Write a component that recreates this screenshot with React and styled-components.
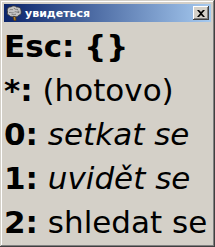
import React from 'react';
import styled, { createGlobalStyle } from 'styled-components';

/*
	:::: Styles ::::
*/
const Global = createGlobalStyle`
	html, body {
		margin: 0;
		padding: 0;
		background: #d4d0c8;
	}
`;

const Window = styled.div`
	box-sizing: border-box;
	width: 215px;
	height: 247px;
	padding: 4px;
	background-color: #d4d0c8;
	box-shadow:
		inset -1px -1px #404040,
		inset 1px 1px #d4d0c8,
		inset -2px -2px #808080,
		inset 2px 2px #ffffff;
	display: flex;
	flex-direction: column;
	overflow: hidden;
`;

const TitleBar = styled.div`
	height: 18px;
	flex: none;
	display: flex;
	align-items: center;
	padding: 0 2px;
	background: linear-gradient(to right, #0a246a, #a6caf0);
`;

const TitleIcon = styled.svg`
	width: 16px;
	height: 16px;
	flex: none;
`;

const TitleText = styled.span`
	flex: 1;
	margin-left: 3px;
	font-family: "DejaVu Sans", Tahoma, sans-serif;
	font-size: 11px;
	font-weight: bold;
	color: #ffffff;
	white-space: nowrap;
`;

const CloseBtn = styled.div`
	box-sizing: border-box;
	width: 16px;
	height: 14px;
	flex: none;
	display: flex;
	align-items: center;
	justify-content: center;
	background-color: #d4d0c8;
	box-shadow:
		inset -1px -1px #404040,
		inset 1px 1px #ffffff,
		inset -2px -2px #808080;
`;

const Content = styled.div`
	flex: 1;
	padding-top: 2px;
	font-family: "DejaVu Sans", Tahoma, sans-serif;
	font-size: 31px;
	line-height: 44px;
	color: #000000;
`;

const Line = styled.div`
	white-space: nowrap;
	font-style: ${p => (p.$italic ? 'italic' : 'normal')};
`;

const Key = styled.span`
	font-weight: bold;
	font-style: normal;
`;

const rows = [
	{ key: 'Esc:', text: '{}', bold: true },
	{ key: '*:', text: '(hotovo)' },
	{ key: '0:', text: 'setkat se', italic: true },
	{ key: '1:', text: 'uvidět se', italic: true },
	{ key: '2:', text: 'shledat se' },
];

const BrainIcon = () => (
	<TitleIcon viewBox="0 0 16 16">
		<path d="M7 11 L8 15.5 L10 15.5 L9.5 11 Z" fill="#b8862a" stroke="#5a3a10" strokeWidth="0.8" />
		<path
			d="M1.5 7 C0.5 3.5 3 1.5 5 2 C6 0.5 9.5 0.5 10.5 2 C12.5 1.5 15.3 3 15 5.5 C15.8 7.5 15 10 12.8 10.3 C11.7 12 9 12.2 8 11.2 C6.5 12.2 3.8 11.8 3.2 10.3 C1.5 10 0.8 8.5 1.5 7 Z"
			fill="#c4c4c4"
			stroke="#383838"
			strokeWidth="0.9"
		/>
		<path d="M3.5 5 C5 4 6 5 7 4.5 M8 3 C9 5 10 4 12 4.5 M3 7.5 C5 7 6 8.5 7.5 7.5 M8.5 7 C10 6 11 8 13.5 7 M5.5 9.8 C7 9 8 9.8 10 9.2 M12 5.5 L12.5 8"
			fill="none" stroke="#6a6a6a" strokeWidth="0.8" />
	</TitleIcon>
);

const App = () => {
	return (
		<>
			<Global />
			<Window>
				<TitleBar>
					<BrainIcon />
					<TitleText>увидеться</TitleText>
					<CloseBtn>
						<svg width="8" height="7" viewBox="0 0 8 7">
							<path d="M0 0h2l2 2 2-2h2L5 3.5 8 7H6L4 5 2 7H0l3-3.5z" fill="#000" />
						</svg>
					</CloseBtn>
				</TitleBar>
				<Content>
					{rows.map(r => (
						<Line key={r.key} $italic={r.italic}>
							<Key>{r.key}</Key>{' '}
							{r.bold ? <Key>{r.text}</Key> : r.text}
						</Line>
					))}
				</Content>
			</Window>
		</>
	);
};

export default App;
